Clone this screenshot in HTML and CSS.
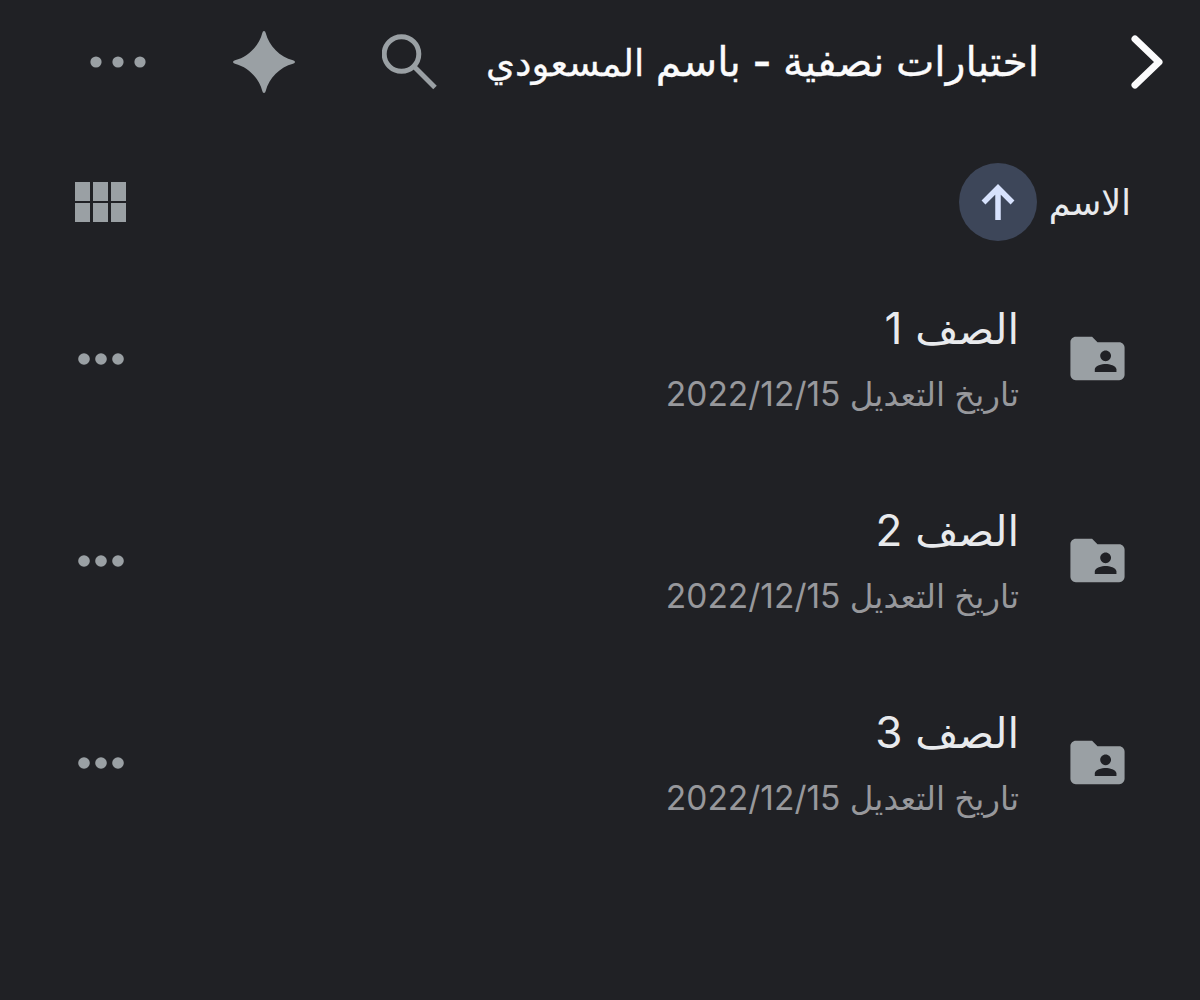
FILE: index.html
```html
<!DOCTYPE html>
<html lang="ar" dir="rtl">
<head>
    <meta charset="UTF-8">
    <meta name="viewport" content="width=device-width, initial-scale=1.0">
    <title>اختبارات نصفية - باسم المسعودي</title>
    <link rel="stylesheet" href="styles.css">
</head>
<body>
    <!-- Top bar -->
    <header class="topbar">
        <svg class="back" width="32" height="54" viewBox="0 0 32 54">
            <path d="M4 4L28 27L4 50"/>
        </svg>
        <h1 class="title">اختبارات نصفية <span class="dash">-</span> باسم <span class="surname">المسعودي</span></h1>
        <div class="actions">
            <svg class="search" width="56" height="56" viewBox="0 0 56 56">
                <circle cx="19.500" cy="20" r="17.3"/>
                <path d="M31.500 32L53 53.500"/>
            </svg>
            <svg class="fill" width="62" height="62" viewBox="0 0 62 62">
                <path d="M31 0Q32.300 0 32.700 2C36 15 47 26 60 29.300Q62 29.700 62 31Q62 32.300 60 32.700C47 36 36 47 32.700 60Q32.300 62 31 62Q29.700 62 29.300 60C26 47 15 36 2 32.700Q0 32.300 0 31Q0 29.700 2 29.300C15 26 26 15 29.300 2Q29.700 0 31 0Z"/>
            </svg>
            <svg class="fill" width="56" height="12" viewBox="0 0 56 12">
                <circle cx="6" cy="6" r="5.600"/>
                <circle cx="28" cy="6" r="5.600"/>
                <circle cx="50" cy="6" r="5.600"/>
            </svg>
        </div>
    </header>

    <!-- Sort row -->
    <div class="sortbar">
        <span class="sort-name">الاسم</span>
        <span class="sort-arrow">
            <svg width="34" height="36" viewBox="0 0 34 36">
                <path d="M17 36V4M2.500 18.500L17 4L31.500 18.500"/>
            </svg>
        </span>
        <div class="grid-icon">
            <i></i><i></i><i></i>
            <i></i><i></i><i></i>
        </div>
    </div>

    <!-- Folders -->
    <ul class="folders">
        <li class="folder">
            <svg class="fill folder-icon" width="65" height="65" viewBox="0 0 24 24">
                <path d="M20 6h-8l-2-2H4c-1.100 0-2 .9-2 2v12c0 1.100.9 2 2 2h16c1.100 0 2-.9 2-2V8c0-1.100-.9-2-2-2zm-5 3c1.100 0 2 .9 2 2s-.9 2-2 2-2-.9-2-2 .9-2 2-2zm4 8h-8v-1c0-1.330 2.670-2 4-2s4 .67 4 2v1z"/>
            </svg>
            <div class="info">
                <h2 class="name">الصف <bdi>1</bdi></h2>
                <p class="date">تاريخ التعديل <bdi dir="ltr">2022/12/15</bdi></p>
            </div>
            <svg class="fill" width="46" height="12" viewBox="0 0 46 12">
                <circle cx="6" cy="6" r="5.800"/>
                <circle cx="23" cy="6" r="5.800"/>
                <circle cx="40" cy="6" r="5.800"/>
            </svg>
        </li>
        <li class="folder">
            <svg class="fill folder-icon" width="65" height="65" viewBox="0 0 24 24">
                <path d="M20 6h-8l-2-2H4c-1.100 0-2 .9-2 2v12c0 1.100.9 2 2 2h16c1.100 0 2-.9 2-2V8c0-1.100-.9-2-2-2zm-5 3c1.100 0 2 .9 2 2s-.9 2-2 2-2-.9-2-2 .9-2 2-2zm4 8h-8v-1c0-1.330 2.670-2 4-2s4 .67 4 2v1z"/>
            </svg>
            <div class="info">
                <h2 class="name">الصف <bdi>2</bdi></h2>
                <p class="date">تاريخ التعديل <bdi dir="ltr">2022/12/15</bdi></p>
            </div>
            <svg class="fill" width="46" height="12" viewBox="0 0 46 12">
                <circle cx="6" cy="6" r="5.800"/>
                <circle cx="23" cy="6" r="5.800"/>
                <circle cx="40" cy="6" r="5.800"/>
            </svg>
        </li>
        <li class="folder">
            <svg class="fill folder-icon" width="65" height="65" viewBox="0 0 24 24">
                <path d="M20 6h-8l-2-2H4c-1.100 0-2 .9-2 2v12c0 1.100.9 2 2 2h16c1.100 0 2-.9 2-2V8c0-1.100-.9-2-2-2zm-5 3c1.100 0 2 .9 2 2s-.9 2-2 2-2-.9-2-2 .9-2 2-2zm4 8h-8v-1c0-1.330 2.670-2 4-2s4 .67 4 2v1z"/>
            </svg>
            <div class="info">
                <h2 class="name">الصف <bdi>3</bdi></h2>
                <p class="date">تاريخ التعديل <bdi dir="ltr">2022/12/15</bdi></p>
            </div>
            <svg class="fill" width="46" height="12" viewBox="0 0 46 12">
                <circle cx="6" cy="6" r="5.800"/>
                <circle cx="23" cy="6" r="5.800"/>
                <circle cx="40" cy="6" r="5.800"/>
            </svg>
        </li>
    </ul>
</body>
</html>
```
FILE: styles.css
```css
* {
    box-sizing: border-box;
    margin: 0;
    padding: 0;
}

body {
    background-color: #202125;
    color: #e8eaed;
    font-family: Inter, "DejaVu Sans", sans-serif;
    min-height: 1000px;
}

svg {
    display: block;
    flex-shrink: 0;
}

.fill {
    fill: #9aa0a4;
}

/* Top bar */
.topbar {
    display: flex;
    align-items: center;
    height: 124px;
    padding: 0 37px 0 90px;
}

.back {
    fill: none;
    stroke: #fbfbfc;
    stroke-width: 7;
    stroke-linecap: round;
    stroke-linejoin: round;
}

.title {
    margin-right: 92px;
    color: #fbfbfc;
    font-size: 40.8px;
    font-weight: 400;
    line-height: 60px;
    white-space: nowrap;
    -webkit-text-stroke: 0.3px #fbfbfc;
}

.dash {
    font-weight: 600;
}

.surname {
    font-size: 37px;
}

.actions {
    display: flex;
    align-items: center;
    gap: 87px;
    margin-right: auto;
}

.search {
    fill: none;
    stroke: #9aa0a4;
    stroke-width: 5;
}

/* Sort row */
.sortbar {
    display: flex;
    align-items: center;
    height: 156px;
    padding: 0 69px 0 75px;
}

.sort-name {
    font-size: 35px;
    line-height: 50px;
}

.sort-arrow {
    display: flex;
    align-items: center;
    justify-content: center;
    width: 78px;
    height: 78px;
    margin-right: 12px;
    border-radius: 50%;
    background-color: #3d4659;
}

.sort-arrow path {
    fill: none;
    stroke: #d7e2fd;
    stroke-width: 5.5;
}

.grid-icon {
    display: grid;
    grid-template-columns: repeat(3, 15px);
    grid-template-rows: repeat(2, 19px);
    gap: 2px 3px;
    margin-right: auto;
}

.grid-icon i {
    background-color: #9aa0a4;
}

/* Folder list */
.folders {
    margin-top: -22px;
    list-style: none;
}

.folder {
    display: flex;
    align-items: center;
    height: 202px;
    padding: 0 70px 0 78px;
}

.folder-icon {
    margin-bottom: 2px;
}

.info {
    flex: 1;
    margin-right: 46px;
}

.name {
    margin-bottom: 10px;
    font-size: 41.8px;
    font-weight: 400;
    line-height: 59px;
    word-spacing: 1px;
}

.name bdi {
    font-size: 44px;
}

.date {
    color: #97989c;
    font-size: 32.6px;
    line-height: 50px;
}

.date bdi {
    font-size: 33.5px;
}
```
